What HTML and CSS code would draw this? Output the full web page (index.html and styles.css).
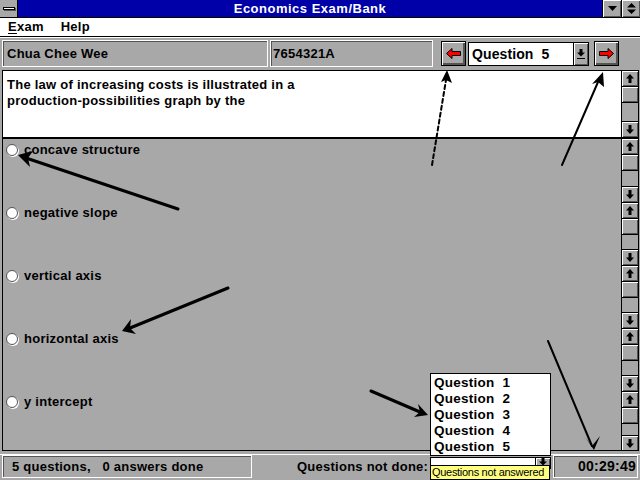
FILE: index.html
```html
<!DOCTYPE html>
<html>
<head>
<meta charset="utf-8">
<link rel="stylesheet" href="styles.css">
</head>
<body>
<div class="window">
  <div class="titlebar">
    <div class="sysmenu"><span class="sysbar"></span></div>
    <div class="title">Economics Exam/Bank</div>
    <div class="tbtn"><svg width="9" height="5" viewBox="0 0 9 5"><path d="M0 0H9L4.5 5Z"/></svg></div>
    <div class="tbtn"><svg width="9" height="11" viewBox="0 0 9 11"><path d="M0 4.5H9L4.5 0Z M0 6.5H9L4.5 11Z"/></svg></div>
  </div>
  <div class="menubar">
    <span class="menu"><u>E</u>xam</span>
    <span class="menu">Help</span>
  </div>
  <div class="toolbar">
    <div class="field name">Chua Chee Wee</div>
    <div class="field id">7654321A</div>
    <div class="navbtn prev"><svg width="15" height="11" viewBox="0 0 15 11"><path d="M0.5 5.5L6 0.5V3.5H14.5V7.5H6V10.5Z" fill="#ff0000" stroke="#000"/></svg></div>
    <div class="combo">
      <span class="combo-text">Question&nbsp; 5</span>
      <span class="ddbtn"><svg width="8" height="10" viewBox="0 0 8 10"><path d="M2.5 0H5.5V3.5H8L4 7.5L0 3.5H2.5Z M0 9H8V10H0Z"/></svg></span>
    </div>
    <div class="navbtn next"><svg width="15" height="11" viewBox="0 0 15 11"><path d="M14.5 5.5L9 0.5V3.5H0.5V7.5H9V10.5Z" fill="#ff0000" stroke="#000"/></svg></div>
  </div>
  <div class="client">
    <div class="question">
      <div class="qtext">The law of increasing costs is illustrated in a<br>production-possibilities graph by the</div>
      <div class="sb q-sb">
        <div class="sbbtn up"><svg width="8" height="9" viewBox="0 0 8 9"><path d="M4 0L8 4.5H5.5V9H2.5V4.5H0Z"/></svg></div>
        <div class="thumb"></div>
        <div class="track"></div>
        <div class="sbbtn down"><svg width="8" height="9" viewBox="0 0 8 9"><path d="M4 9L8 4.5H5.5V0H2.5V4.5H0Z"/></svg></div>
      </div>
    </div>
    <div class="answers">
      <div class="answer">
        <div class="opt"><span class="radio"></span>concave structure</div>
        <div class="sb">
          <div class="sbbtn up"><svg width="8" height="9" viewBox="0 0 8 9"><path d="M4 0L8 4.5H5.5V9H2.5V4.5H0Z"/></svg></div>
          <div class="thumb"></div><div class="track"></div>
          <div class="sbbtn down"><svg width="8" height="9" viewBox="0 0 8 9"><path d="M4 9L8 4.5H5.5V0H2.5V4.5H0Z"/></svg></div>
        </div>
      </div>
      <div class="answer">
        <div class="opt"><span class="radio"></span>negative slope</div>
        <div class="sb">
          <div class="sbbtn up"><svg width="8" height="9" viewBox="0 0 8 9"><path d="M4 0L8 4.5H5.5V9H2.5V4.5H0Z"/></svg></div>
          <div class="thumb"></div><div class="track"></div>
          <div class="sbbtn down"><svg width="8" height="9" viewBox="0 0 8 9"><path d="M4 9L8 4.5H5.5V0H2.5V4.5H0Z"/></svg></div>
        </div>
      </div>
      <div class="answer">
        <div class="opt"><span class="radio"></span>vertical axis</div>
        <div class="sb">
          <div class="sbbtn up"><svg width="8" height="9" viewBox="0 0 8 9"><path d="M4 0L8 4.5H5.5V9H2.5V4.5H0Z"/></svg></div>
          <div class="thumb"></div><div class="track"></div>
          <div class="sbbtn down"><svg width="8" height="9" viewBox="0 0 8 9"><path d="M4 9L8 4.5H5.5V0H2.5V4.5H0Z"/></svg></div>
        </div>
      </div>
      <div class="answer">
        <div class="opt"><span class="radio"></span>horizontal axis</div>
        <div class="sb">
          <div class="sbbtn up"><svg width="8" height="9" viewBox="0 0 8 9"><path d="M4 0L8 4.5H5.5V9H2.5V4.5H0Z"/></svg></div>
          <div class="thumb"></div><div class="track"></div>
          <div class="sbbtn down"><svg width="8" height="9" viewBox="0 0 8 9"><path d="M4 9L8 4.5H5.5V0H2.5V4.5H0Z"/></svg></div>
        </div>
      </div>
      <div class="answer last">
        <div class="opt"><span class="radio"></span>y intercept</div>
        <div class="sb">
          <div class="sbbtn up"><svg width="8" height="9" viewBox="0 0 8 9"><path d="M4 0L8 4.5H5.5V9H2.5V4.5H0Z"/></svg></div>
          <div class="thumb"></div><div class="track"></div>
          <div class="sbbtn down"><svg width="8" height="9" viewBox="0 0 8 9"><path d="M4 9L8 4.5H5.5V0H2.5V4.5H0Z"/></svg></div>
        </div>
      </div>
    </div>
  </div>
  <div class="statusbar">
    <div class="panel count">5 questions,&nbsp;&nbsp; 0 answers done</div>
    <div class="notdone">Questions not done:</div>
    <div class="scombo">
      <span class="scombo-field"></span>
      <span class="sddbtn"><svg width="8" height="10" viewBox="0 0 8 10"><path d="M2.5 0H5.5V3.5H8L4 7.5L0 3.5H2.5Z M0 9H8V10H0Z"/></svg></span>
    </div>
    <div class="panel timer">00:29:49</div>
  </div>

  <ul class="droplist">
    <li>Question&nbsp; 1</li>
    <li>Question&nbsp; 2</li>
    <li>Question&nbsp; 3</li>
    <li>Question&nbsp; 4</li>
    <li>Question&nbsp; 5</li>
  </ul>
  <div class="tooltip">Questions not answered</div>

  <svg class="annot" width="640" height="480" viewBox="0 0 640 480">
    <g stroke="#000" fill="none" stroke-linecap="round">
      <line x1="178" y1="209" x2="26" y2="158" stroke-width="3"/>
      <line x1="432" y1="165" x2="446" y2="80" stroke-width="2" stroke-dasharray="4 3"/>
      <line x1="562" y1="165" x2="598" y2="82" stroke-width="2"/>
      <line x1="228" y1="288" x2="130" y2="328" stroke-width="3"/>
      <line x1="371" y1="391" x2="420" y2="412" stroke-width="3"/>
      <line x1="548" y1="341" x2="592" y2="446" stroke-width="2"/>
    </g>
    <g fill="#000">
      <path d="M18 155L33 151L28 158L30 167Z"/>
      <path d="M447 70L452 83L446 80L441 82Z"/>
      <path d="M603 72L604 87L598 82L592 84Z"/>
      <path d="M122 331L131 319L130 328L136 334Z"/>
      <path d="M428 415L414 417L420 412L418 404Z"/>
      <path d="M594 450L585 437L592 446L600 436Z"/>
    </g>
  </svg>
</div>
</body>
</html>
```

FILE: styles.css
```css
* { box-sizing: border-box; }
html, body { margin: 0; padding: 0; }
body {
  width: 640px;
  height: 480px;
  overflow: hidden;
  background: #a8a8a8;
  font-family: "Liberation Sans", Arial, sans-serif;
  font-weight: bold;
  font-size: 13px;
  letter-spacing: 0.25px;
  color: #000;
}
.window {
  position: relative;
  width: 640px;
  height: 480px;
  display: flex;
  flex-direction: column;
}

/* title bar */
.titlebar {
  height: 18px;
  background: #0000a8;
  border-bottom: 1px solid #000;
  display: flex;
}
.sysmenu {
  width: 18px;
  background: #a8a8a8;
  border-right: 1px solid #000;
  display: flex;
  align-items: center;
  justify-content: center;
}
.sysbar {
  width: 12px;
  height: 3px;
  background: #fff;
  border: 1px solid #000;
  box-shadow: 1px 1px 0 #545454;
}
.title {
  flex: 1;
  color: #fff;
  text-align: center;
  line-height: 17px;
  font-size: 13px;
  letter-spacing: 0.5px;
}
.tbtn {
  width: 19px;
  background: #a8a8a8;
  border-left: 1px solid #000;
  box-shadow: inset 1px 1px 0 #fff, inset -1px -1px 0 #545454;
  display: flex;
  align-items: center;
  justify-content: center;
}

/* menu */
.menubar {
  height: 19px;
  background: #fff;
  border-bottom: 1px solid #000;
  display: flex;
  align-items: center;
  padding-left: 8px;
  gap: 17px;
  font-size: 13px;
}
.menu u { text-decoration-thickness: 1px; text-underline-offset: 2px; }

/* toolbar */
.toolbar {
  height: 33px;
  display: flex;
  align-items: center;
  padding: 0 2px;
  border-top: 1px solid #fff;
}
.toolbar > * { flex: none; }
.field {
  height: 27px;
  border: 1px solid #fff;
  box-shadow: inset 1px 1px 0 #545454;
  padding-left: 4px;
  display: flex;
  align-items: center;
}
.field.name { width: 266px; }
.field.id { width: 163px; margin-left: 2px; padding-left: 2px; }
.navbtn {
  width: 25px;
  height: 25px;
  border: 1px solid #000;
  background: #a8a8a8;
  box-shadow: inset 1px 1px 0 #fff, inset -2px -2px 0 #545454;
  display: flex;
  align-items: center;
  justify-content: center;
}
.navbtn.prev { margin-left: 8px; }
.navbtn.next { margin-left: 5px; }
.combo {
  margin-left: 2px;
  width: 121px;
  height: 24px;
  border: 1px solid #000;
  background: #fff;
  display: flex;
}
.combo-text {
  flex: 1;
  padding-left: 3px;
  font-size: 14px;
  letter-spacing: 0.1px;
  line-height: 22px;
}
.ddbtn, .sddbtn {
  width: 15px;
  background: #a8a8a8;
  border-left: 1px solid #000;
  box-shadow: inset 1px 1px 0 #fff, inset -1px -1px 0 #545454;
  display: flex;
  align-items: center;
  justify-content: center;
}

/* client area */
.client {
  margin: 0 1px 0 2px;
  border: 1px solid #000;
  height: 382px;
  display: flex;
  flex-direction: column;
  overflow: hidden;
}
.question {
  height: 68px;
  background: #fff;
  border-bottom: 2px solid #000;
  display: flex;
}
.qtext {
  flex: 1;
  padding: 6px 4px;
  line-height: 16px;
}
.sb {
  width: 17px;
  border-left: 1px solid #000;
  background: #a8a8a8;
  display: flex;
  flex-direction: column;
}
.sbbtn {
  height: 16px;
  background: #a8a8a8;
  box-shadow: inset 1px 1px 0 #fff, inset -1px -1px 0 #545454;
  display: flex;
  align-items: center;
  justify-content: center;
}
.sbbtn.up { border-bottom: 1px solid #000; }
.sbbtn.down { border-top: 1px solid #000; }
.thumb {
  height: 16px;
  border-bottom: 1px solid #000;
  box-shadow: inset 1px 1px 0 #fff, inset -1px -1px 0 #545454;
}
.track { flex: 1; background: #a8a8a8; }

.answers {
  flex: 1;
  display: flex;
  flex-direction: column;
  overflow: hidden;
}
.answer {
  height: 63px;
  flex: none;
  display: flex;
}
.answer .sb { border-top: 1px solid #000; }
.answer:first-child .sb { border-top: none; }
.answer.last { height: 60px; }
.opt {
  flex: 1;
  display: flex;
  align-items: flex-start;
  padding: 2px 0 0 3px;
  line-height: 17px;
}
.radio {
  width: 12px;
  height: 12px;
  border-radius: 50%;
  background: #fff;
  border: 1px solid #545454;
  box-shadow: 1px 1px 0 #fff;
  margin: 3px 6px 0 0;
}

/* status bar */
.statusbar {
  flex: 1;
  display: flex;
  align-items: flex-end;
  padding: 0 2px 2px 2px;
  border-top: 1px solid #fff;
  margin-top: 3px;
}
.panel {
  height: 23px;
  border: 1px solid #fff;
  box-shadow: inset 1px 1px 0 #545454;
  display: flex;
  align-items: center;
}
.panel.count { width: 250px; padding-left: 9px; }
.notdone {
  margin-left: 45px;
  height: 23px;
  line-height: 23px;
  width: 133px;
}
.scombo {
  align-self: flex-start;
  margin-top: 2px;
  width: 121px;
  height: 12px;
  background: #fff;
  border: 1px solid #000;
  display: flex;
}
.scombo-field { flex: 1; }
.timer {
  margin-left: 2px;
  width: 85px;
  justify-content: flex-end;
  padding-right: 1px;
  font-size: 14px;
}

/* overlays */
.droplist {
  position: absolute;
  left: 430px;
  top: 373px;
  width: 121px;
  height: 83px;
  margin: 0;
  padding: 1px 0 0 3px;
  list-style: none;
  background: #fff;
  border: 1px solid #000;
  font-size: 13.5px;
  line-height: 16px;
}
.tooltip {
  position: absolute;
  left: 430px;
  top: 465px;
  width: 120px;
  height: 15px;
  background: #ffff80;
  border: 1px solid #000;
  font-weight: normal;
  font-size: 11px;
  letter-spacing: -0.3px;
  line-height: 13px;
  padding-left: 1px;
  white-space: nowrap;
  overflow: hidden;
}
.annot {
  position: absolute;
  left: 0;
  top: 0;
  pointer-events: none;
}
```
